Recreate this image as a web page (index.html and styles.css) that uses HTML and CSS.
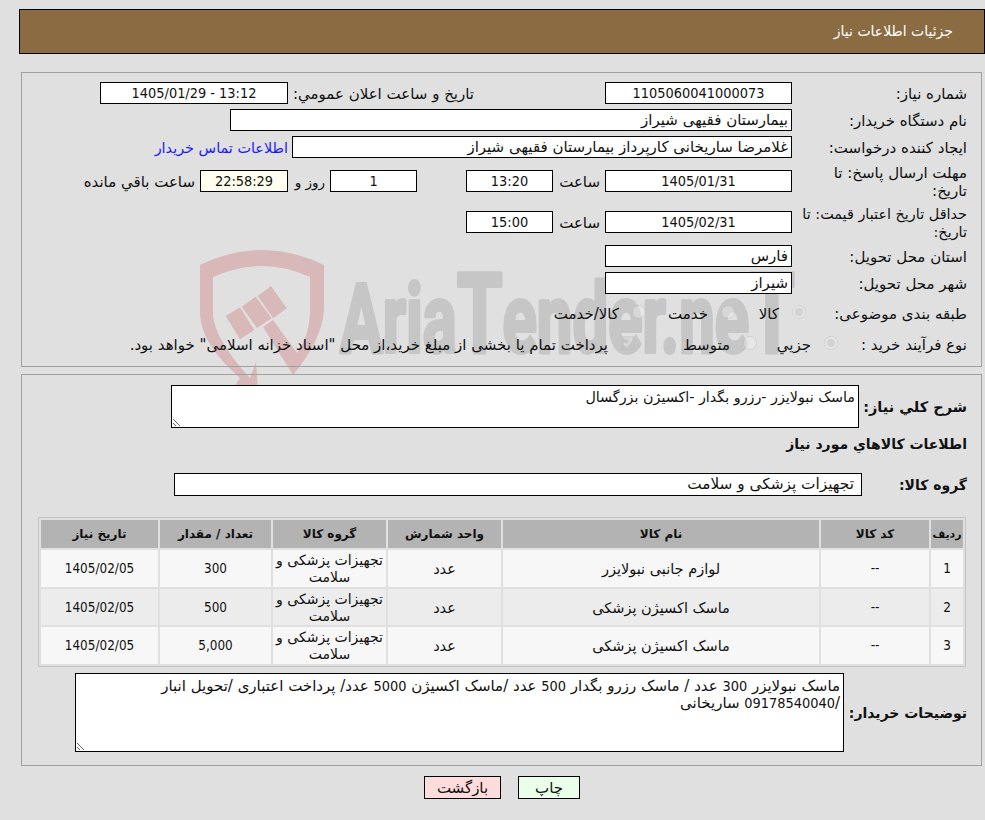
FILE: index.html
```html
<!DOCTYPE html>
<html lang="fa" dir="rtl">
<head>
  <meta charset="UTF-8">
  <title>جزئیات اطلاعات نیاز</title>
  <link rel="stylesheet" href="styles.css">
</head>
<body>
  <div class="page">
    <svg class="watermark" viewBox="190 245 620 145" aria-hidden="true">
      <path class="wm-shield" fill-rule="evenodd" d="M200 265 Q262 235 324 265 L324 310 Q322 340 293 375 L263 327 L273 320 L297 353 Q310 335 310 310 L310 277 Q262 255 213 277 L213 315 Q215 340 250 378 L256 362 L258 390 L232 390 L240 378 Q202 345 200 315 Z"/>
      <polygon class="wm-shield" points="225.7,316 240,307.3 254.3,330 240,339.3"/>
      <polygon class="wm-shield" points="241.7,306.7 255.7,296.7 271.7,318.3 257,328"/>
      <polygon class="wm-shield" points="257.7,296 271,286 286.7,308.3 273.3,318.3"/>
      <text class="wm-text" x="340" y="352" textLength="455" lengthAdjust="spacingAndGlyphs" direction="ltr">Aria<tspan class="wm-big">T</tspan>ender.ne<tspan class="wm-big">T</tspan></text>
    </svg>

    <div class="title-bar">جزئیات اطلاعات نیاز</div>

    <div class="panel panel-info">
      <div class="row">
        <div class="label">شماره نیاز:</div>
        <div class="field field-md center num">1105060041000073</div>
        <div class="label-public">تاریخ و ساعت اعلان عمومي:</div>
        <div class="field field-date center num" dir="ltr">1405/01/29 - 13:12</div>
      </div>
      <div class="row">
        <div class="label">نام دستگاه خریدار:</div>
        <div class="field field-buyer">بیمارستان فقیهی شیراز</div>
      </div>
      <div class="row">
        <div class="label">ایجاد کننده درخواست:</div>
        <div class="field field-creator">غلامرضا ساریخانی کارپرداز بیمارستان فقیهی شیراز</div>
        <a class="contact" href="#">اطلاعات تماس خریدار</a>
      </div>
      <div class="row row-tall">
        <div class="label">مهلت ارسال پاسخ: تا<br>تاریخ:</div>
        <div class="field field-md center num">1405/01/31</div>
        <div class="time-label">ساعت</div>
        <div class="field field-sm center num">13:20</div>
        <div class="field field-sm field-days center num">1</div>
        <div class="days-label">روز و</div>
        <div class="field field-sm field-clock center num">22:58:29</div>
        <div class="left-label">ساعت باقي مانده</div>
      </div>
      <div class="row row-tall">
        <div class="label label-long">حداقل تاریخ اعتبار قیمت: تا<br>تاریخ:</div>
        <div class="field field-md center num">1405/02/31</div>
        <div class="time-label">ساعت</div>
        <div class="field field-sm center num">15:00</div>
      </div>
      <div class="row">
        <div class="label">استان محل تحویل:</div>
        <div class="field field-md">فارس</div>
      </div>
      <div class="row">
        <div class="label">شهر محل تحویل:</div>
        <div class="field field-md">شیراز</div>
      </div>
      <div class="row row-choice row-subject">
        <div class="choice-label">طبقه بندی موضوعی:</div>
        <label class="opt opt-kala"><input type="radio" name="subject" checked disabled>کالا</label>
        <label class="opt opt-service"><input type="radio" name="subject" disabled>خدمت</label>
        <label class="opt"><input type="radio" name="subject" disabled>کالا/خدمت</label>
      </div>
      <div class="row row-choice row-process">
        <div class="choice-label">نوع فرآیند خرید :</div>
        <label class="opt opt-minor"><input type="radio" name="process" checked disabled>جزيي</label>
        <label class="opt opt-medium"><input type="radio" name="process" disabled>متوسط</label>
        <label class="opt"><input type="checkbox" checked disabled>پرداخت تمام یا بخشی از مبلغ خرید،از محل "اسناد خزانه اسلامی" خواهد بود.</label>
      </div>
    </div>

    <div class="panel panel-goods">
      <div class="row row-summary">
        <div class="label-bold">شرح كلي نياز:</div>
        <div class="area area-summary">ماسک نبولایزر -رزرو بگدار -اکسیژن بزرگسال</div>
      </div>
      <h3 class="goods-title">اطلاعات کالاهاي مورد نياز</h3>
      <div class="row row-group">
        <div class="label-bold">گروه کالا:</div>
        <div class="field field-group">تجهیزات پزشکی و سلامت</div>
      </div>

      <table class="goods">
        <colgroup>
          <col class="col-num"><col class="col-code"><col class="col-name">
          <col class="col-unit"><col class="col-group"><col class="col-qty"><col class="col-date">
        </colgroup>
        <thead>
          <tr>
            <th class="th-num">ردیف</th><th>کد کالا</th><th>نام کالا</th><th>واحد شمارش</th>
            <th>گروه کالا</th><th>تعداد / مقدار</th><th>تاریخ نیاز</th>
          </tr>
        </thead>
        <tbody>
          <tr>
            <td class="num">1</td><td class="num">--</td><td>لوازم جانبی نبولایزر</td><td>عدد</td>
            <td class="cell-group">تجهیزات پزشکی و سلامت</td><td class="num">300</td><td class="num">1405/02/05</td>
          </tr>
          <tr>
            <td class="num">2</td><td class="num">--</td><td>ماسک اکسیژن پزشکی</td><td>عدد</td>
            <td class="cell-group">تجهیزات پزشکی و سلامت</td><td class="num">500</td><td class="num">1405/02/05</td>
          </tr>
          <tr>
            <td class="num">3</td><td class="num">--</td><td>ماسک اکسیژن پزشکی</td><td>عدد</td>
            <td class="cell-group">تجهیزات پزشکی و سلامت</td><td class="num">5,000</td><td class="num">1405/02/05</td>
          </tr>
        </tbody>
      </table>

      <div class="row row-notes">
        <div class="label-bold">توضیحات خریدار:</div>
        <div class="area area-notes">ماسک نبولایزر <span class="num">300</span> عدد / ماسک رزرو بگدار <span class="num">500</span> عدد /ماسک اکسیژن <span class="num">5000</span> عدد/ پرداخت اعتباری /تحویل انبار<br>/<span class="num">09178540040</span> ساریخانی</div>
      </div>
    </div>

    <div class="actions">
      <button class="btn btn-print" type="button">چاپ</button>
      <button class="btn btn-back" type="button">بازگشت</button>
    </div>
  </div>
</body>
</html>
```

FILE: styles.css
```css
* {
  box-sizing: border-box;
}
html, body {
  margin: 0;
  padding: 0;
  background-color: #e0e0e0;
}
body {
  font-family: "DejaVu Sans", sans-serif;
  font-size: 15px;
  color: #111;
  overflow-x: hidden;
}
.num {
  font-family: "DejaVu Sans Condensed", "DejaVu Sans", sans-serif;
  font-size: 14.4px;
}
.page {
  position: relative;
  width: 985px;
  height: 820px;
  padding-top: 9px;
}
.watermark {
  position: absolute;
  left: 190px;
  top: 245px;
  width: 620px;
  height: 145px;
}
.wm-shield {
  fill: #d8b8b9;
}
.wm-text {
  fill: #c6c6c6;
  stroke: #c6c6c6;
  stroke-width: 4px;
  stroke-linejoin: round;
  font-family: Roboto, sans-serif;
  font-weight: 700;
  font-size: 96px;
}
.wm-big {
  font-size: 112px;
}
.title-bar {
  position: relative;
  height: 45px;
  margin-left: 19px;
  padding-right: 31px;
  font-size: 14px;
  line-height: 43px;
  color: #fff;
  background-color: #8b6b42;
  border: 1px solid #000;
}
.panel {
  position: relative;
  width: 961px;
  margin-left: 21px;
  margin-right: 3px;
  border: 1px solid #a0a0a0;
}
.panel-info {
  height: 295px;
  margin-top: 18px;
  padding: 9px 14px 0 0;
}
.panel-goods {
  height: 392px;
  margin-top: 7px;
  padding: 10px 14px 0 0;
}
.row {
  display: flex;
  align-items: center;
  height: 22px;
  margin-bottom: 5px;
}
.row-tall {
  height: 36px;
}
.label {
  width: 175px;
  padding: 2px 0 0 0;
  line-height: 18px;
  white-space: nowrap;
  flex-shrink: 0;
}
.label-long {
  font-size: 14.4px;
}
.field {
  height: 22px;
  line-height: 20px;
  padding: 0 3px;
  background-color: #fff;
  border: 1px solid #000;
  white-space: nowrap;
  overflow: hidden;
  flex-shrink: 0;
}
.center {
  text-align: center;
}
.field-md {
  width: 187px;
}
.field-sm {
  width: 87px;
}
.field-date {
  width: 188px;
}
.field-buyer {
  width: 562px;
}
.field-creator {
  width: 500px;
}
.label-public {
  width: 317px;
  padding: 2px 131px 0 0;
  white-space: nowrap;
}
.contact {
  margin-right: 4px;
  padding-top: 2px;
  font-size: 14.4px;
  color: #1a1aff;
  text-decoration: none;
  white-space: nowrap;
}
.time-label {
  width: 52px;
  padding: 2px 5px 0 0;
}
.field-days {
  margin-right: 49px;
}
.days-label {
  width: 42px;
  padding: 2px 5px 0 0;
  font-size: 13.5px;
}
.field-clock {
  width: 88px;
  background-color: #fffff0;
}
.left-label {
  margin-right: 5px;
  padding-top: 2px;
  white-space: nowrap;
}
.choice-label {
  padding-top: 2px;
}
.row-choice {
  margin-bottom: 0;
}
.row-subject {
  height: 28px;
}
.row-process {
  height: 34px;
}
.row-subject .choice-label {
  width: 161px;
}
.row-process .choice-label {
  width: 129px;
}
.opt {
  display: flex;
  align-items: center;
  padding-top: 2px;
  white-space: nowrap;
}
.opt input {
  width: 14px;
  height: 14px;
  margin: 0 0 4px 13px;
  opacity: 0.55;
}
.opt-kala {
  width: 71px;
}
.opt-service {
  width: 89px;
}
.opt-minor {
  width: 81px;
}
.opt-medium {
  width: 122px;
}
.label-bold {
  font-size: 14px;
  font-weight: 700;
  white-space: nowrap;
  flex-shrink: 0;
}
.row-summary {
  height: 43px;
  margin-bottom: 0;
}
.row-summary .label-bold {
  width: 108px;
  font-size: 14.5px;
}
.area {
  padding: 3px 3px 0;
  line-height: 17px;
  background-color: #fff;
  border: 1px solid #000;
  resize: both;
  overflow: auto;
}
.area-summary {
  width: 688px;
  height: 43px;
  font-size: 14.3px;
}
.goods-title {
  height: 32px;
  margin: 0;
  font-size: 14px;
  line-height: 32px;
}
.row-group {
  height: 23px;
  margin: 13px 0 21px;
}
.row-group .label-bold {
  width: 105px;
}
.field-group {
  width: 688px;
  height: 23px;
  padding-right: 7px;
  font-size: 15.3px;
}
.goods {
  width: 928px;
  margin-right: 1px;
  table-layout: fixed;
  border-collapse: separate;
  border-spacing: 2px;
  border: 1px solid #c4c4c4;
}
.col-num { width: 32px; }
.col-code { width: 108px; }
.col-name { width: 316px; }
.col-unit { width: 113px; }
.col-group { width: 113px; }
.col-qty { width: 111px; }
.col-date { width: 117px; }
.goods th {
  height: 28px;
  padding: 0;
  font-size: 12px;
  background-color: #b3b3b3;
}
.goods th.th-num {
  font-size: 11px;
}
.goods td {
  height: 37px;
  padding: 1px 0 0;
  font-size: 14.5px;
  line-height: 18px;
  text-align: center;
  background-color: #f7f7f7;
}
.goods td.num {
  font-size: 13.4px;
}
.goods td.cell-group {
  font-size: 14px;
  line-height: 17px;
}
.goods tbody tr:nth-child(2) td {
  height: 36px;
  background-color: #ececec;
}
.row-notes {
  height: 79px;
  margin: 6px 0 0;
}
.row-notes .label-bold {
  width: 123px;
}
.area-notes {
  width: 769px;
  height: 79px;
  padding-top: 4px;
}
.actions {
  display: flex;
  justify-content: center;
  gap: 17px;
  margin-top: 10px;
  padding-left: 19px;
}
.btn {
  height: 23px;
  padding: 0;
  font-family: "DejaVu Sans", sans-serif;
  font-size: 15px;
  color: #111;
  border: 1px solid #000;
}
.btn-print {
  width: 62px;
  background-color: #eaffea;
}
.btn-back {
  width: 77px;
  background-color: #ffdcdc;
}
```
